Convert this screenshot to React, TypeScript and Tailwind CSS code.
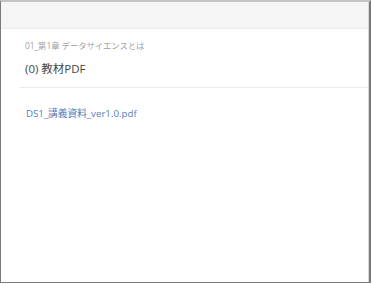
import React from 'react';

const App: React.FC = () => {
  return (
    <div
      className="w-[372px] h-[284px] bg-white"
      style={{ fontFamily: '"Open Sans", "Noto Sans CJK JP", sans-serif' }}
    >
      <div className="w-[371px] h-[283px] flex flex-col border-t-2 border-t-[#c4c4c4] border-l border-l-[#7a7a7a] border-r-2 border-r-[#7a7a7a] border-b border-b-[#7a7a7a]">
        <div className="flex-1 flex flex-col border-r border-r-[#d8d8d8]">
          <div className="h-[27px] bg-[#f5f5f5] border-b border-[#ececec]" />
          <div className="pl-[19px]">
            <div className="pl-[5px] pt-[11px] text-[8.3px] leading-[12px] text-[#a0a0a0]">01_第1章 データサイエンスとは</div>
            <div className="pl-[5px] pt-[9px] pb-[10px] text-[11.5px] leading-[16px] text-[#444]">(0) 教材PDF</div>
            <div className="border-b border-[#eaeaea]" />
            <div className="pl-[6px] pt-[19px] text-[9.7px] leading-[14px] text-[#5580b8]">DS1_講義資料_ver1.0.pdf</div>
          </div>
        </div>
      </div>
    </div>
  );
};

export default App;
